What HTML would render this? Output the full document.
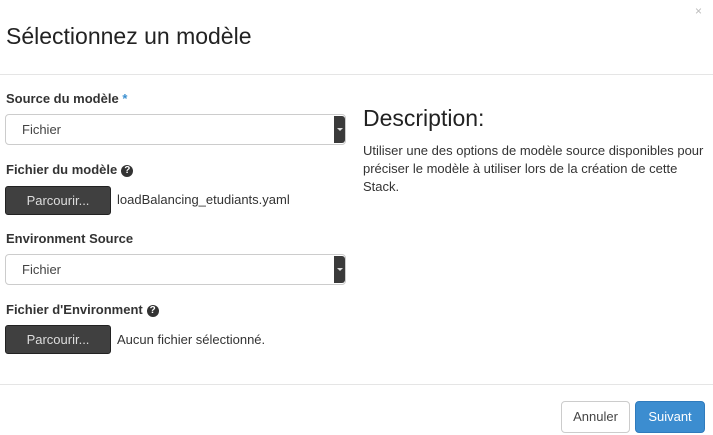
<!DOCTYPE html><html><head><meta charset="utf-8"><style>
body{margin:0;width:713px;height:435px;background:#fff;font-family:"Liberation Sans",sans-serif;color:#333;position:relative;overflow:hidden}
.a{position:absolute;white-space:nowrap}
.lbl{font-size:13px;font-weight:bold;color:#333}
.sel{position:absolute;left:5px;width:341px;height:31px;border:1px solid #ccc;border-radius:4px;box-sizing:border-box;font-size:13px;line-height:29px;padding-left:16px;color:#444}
.sel .ar{position:absolute;right:0;top:1px;width:11px;height:27px;background:#3a3a3a;border-radius:0 3px 3px 0}
.sel .ar:after{content:"";position:absolute;left:3px;top:12px;border:3px solid transparent;border-top:3px solid #ddd}
.btn{position:absolute;left:5px;width:106px;height:29px;background:#404040;border:1px solid #222;border-radius:3px;box-sizing:border-box;color:#ddd;font-size:13px;text-align:center;line-height:27px}
.q{display:inline-block;width:12px;height:12px;border-radius:50%;background:#333;color:#fff;font-size:10px;line-height:12px;text-align:center;vertical-align:1px;margin-left:4px}
</style></head><body>
<div class="a" style="left:695px;top:4px;color:#bbb;font-size:12px">×</div>
<div class="a" style="left:6px;top:23px;font-size:23px;color:#222">Sélectionnez un modèle</div>
<div class="a" style="left:0;top:74px;width:713px;height:1px;background:#e5e5e5"></div>
<div class="a lbl" style="left:6px;top:91px">Source du modèle <span style="color:#3a8fd0">*</span></div>
<div class="sel" style="top:114px">Fichier<div class="ar"></div></div>
<div class="a lbl" style="left:6px;top:162px">Fichier du modèle<span class="q">?</span></div>
<div class="btn" style="top:186px">Parcourir...</div>
<div class="a" style="left:117px;top:192px;font-size:13px">loadBalancing_etudiants.yaml</div>
<div class="a lbl" style="left:6px;top:231px">Environment Source</div>
<div class="sel" style="top:254px">Fichier<div class="ar"></div></div>
<div class="a lbl" style="left:6px;top:302px">Fichier d'Environment<span class="q">?</span></div>
<div class="btn" style="top:325px">Parcourir...</div>
<div class="a" style="left:117px;top:332px;font-size:13px">Aucun fichier sélectionné.</div>
<div class="a" style="left:363px;top:105px;font-size:23px;color:#222">Description:</div>
<div class="a" style="left:363px;top:142px;font-size:13px;line-height:18px">Utiliser une des options de modèle source disponibles pour<br>préciser le modèle à utiliser lors de la création de cette<br>Stack.</div>
<div class="a" style="left:0;top:384px;width:713px;height:1px;background:#e5e5e5"></div>
<div class="a" style="left:561px;top:401px;width:69px;height:32px;border:1px solid #ccc;border-radius:4px;box-sizing:border-box;font-size:13px;line-height:30px;text-align:center;color:#444">Annuler</div>
<div class="a" style="left:635px;top:401px;width:70px;height:32px;background:#3c8dd0;border:1px solid #2f7bbd;border-radius:4px;box-sizing:border-box;font-size:13px;line-height:30px;text-align:center;color:#fff">Suivant</div>
</body></html>
